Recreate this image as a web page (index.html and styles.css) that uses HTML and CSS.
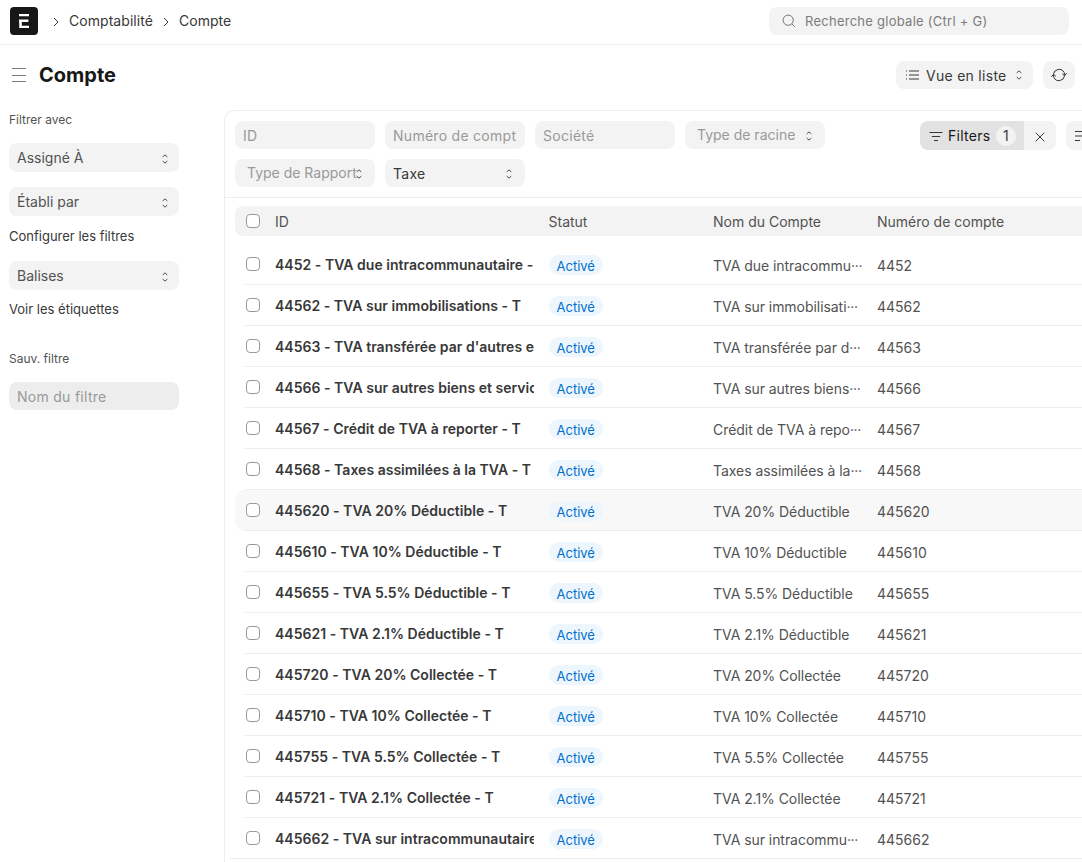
FILE: index.html
```html
<!DOCTYPE html>
<html lang="fr">
<head>
<meta charset="utf-8">
<title>Compte</title>
<link rel="stylesheet" href="styles.css">
</head>
<body>
<svg class="sprite" aria-hidden="true">
  <symbol id="updown" viewBox="0 0 8 10"><path d="M1.7 2.9 4 .9l2.3 2M1.7 7.1 4 9.1l2.3-2"/></symbol>
  <symbol id="chev" viewBox="0 0 6 10"><path d="M1 1l4 4-4 4"/></symbol>
</svg>
<header class="navbar">
  <svg class="logo" viewBox="0 0 28 28"><rect width="28" height="28" rx="4" fill="#171717"/><path d="M9 7h10v2.3H9zM9 12.6h9.4v2.3h-6.6v3.9H19v2.3H9.2v-6.4H9z" fill="#fff"/></svg>
  <nav class="crumbs">
    <svg class="chev"><use href="#chev"/></svg><a>Comptabilité</a>
    <svg class="chev"><use href="#chev"/></svg><a>Compte</a>
  </nav>
  <div class="search"><svg viewBox="0 0 14 14"><circle cx="6.2" cy="6.2" r="5.1"/><path d="M9.9 9.9l3 3"/></svg><span>Recherche globale (Ctrl + G)</span></div>
</header>
<div class="page-head">
  <svg class="burger" viewBox="0 0 14 14"><path d="M0 .5h14M0 7.5h14M0 13.5h14"/></svg>
  <h1>Compte</h1>
  <button class="btn view"><svg class="list-icon" viewBox="0 0 13 11"><path d="M0 1h1M3 1h10M0 5h1M3 5h10M0 9h1M3 9h10"/></svg><span>Vue en liste</span><svg class="updown"><use href="#updown"/></svg></button>
  <button class="btn refresh"><svg viewBox="0 0 16 16"><path d="M2.4 7.4A5.7 5.7 0 0 1 13.2 5.6L13.6 8M13.6 8.6A5.7 5.7 0 0 1 2.8 10.4L2.4 8"/><path d="M11.2 6.8l2.4 1.8 2-2.4M.4 9.8l2-2.4 2.4 1.8"/></svg></button>
</div>
<div class="layout">
  <aside class="sidebar">
    <p class="label">Filtrer avec</p>
    <div class="select">Assigné À<svg class="updown"><use href="#updown"/></svg></div>
    <div class="select second">Établi par<svg class="updown"><use href="#updown"/></svg></div>
    <a class="link">Configurer les filtres</a>
    <div class="select third">Balises<svg class="updown"><use href="#updown"/></svg></div>
    <a class="link">Voir les étiquettes</a>
    <p class="label save">Sauv. filtre</p>
    <div class="name-input">Nom du filtre</div>
  </aside>
  <main class="panel">
    <div class="filters">
      <div class="fields">
        <div class="field">ID</div>
        <div class="field"><span class="cut">Numéro de compt</span></div>
        <div class="field">Société</div>
        <div class="field ph">Type de racine<svg class="updown"><use href="#updown"/></svg></div>
        <div class="field ph">Type de Rapport<svg class="updown"><use href="#updown"/></svg></div>
        <div class="field value">Taxe<svg class="updown"><use href="#updown"/></svg></div>
      </div>
      <div class="actions">
        <div class="group">
          <button class="filter-btn"><svg viewBox="0 0 14 10"><path d="M.5 1.5h13M2.8 5.5h8.4M5 9.5h4"/></svg>Filters<span class="count">1</span></button>
          <button class="clear"><svg viewBox="0 0 10 10"><path d="M.8.8l8.4 8.4M9.2.8L.8 9.2"/></svg></button>
        </div>
        <button class="sort"><svg viewBox="0 0 14 10"><path d="M0 .5h13M0 5h9M0 9.5h5"/></svg></button>
      </div>
    </div>
    <div class="table">
      <div class="thead"><i class="box"></i><span>ID</span><span>Statut</span><span>Nom du Compte</span><span>Numéro de compte</span></div>
      <div class="row"><i class="box"></i><b>4452 - TVA due intracommunautaire -</b><span class="pill">Activé</span><span class="name">TVA due intracommu<em>···</em></span><span>4452</span></div>
      <div class="row"><i class="box"></i><b>44562 - TVA sur immobilisations - T</b><span class="pill">Activé</span><span class="name">TVA sur immobilisati<em>···</em></span><span>44562</span></div>
      <div class="row"><i class="box"></i><b>44563 - TVA transférée par d'autres e</b><span class="pill">Activé</span><span class="name">TVA transférée par d<em>···</em></span><span>44563</span></div>
      <div class="row"><i class="box"></i><b>44566 - TVA sur autres biens et servic</b><span class="pill">Activé</span><span class="name">TVA sur autres biens<em>···</em></span><span>44566</span></div>
      <div class="row"><i class="box"></i><b>44567 - Crédit de TVA à reporter - T</b><span class="pill">Activé</span><span class="name">Crédit de TVA à repo<em>···</em></span><span>44567</span></div>
      <div class="row"><i class="box"></i><b>44568 - Taxes assimilées à la TVA - T</b><span class="pill">Activé</span><span class="name">Taxes assimilées à la<em>···</em></span><span>44568</span></div>
      <div class="row hover"><i class="box"></i><b>445620 - TVA 20% Déductible - T</b><span class="pill">Activé</span><span class="name">TVA 20% Déductible</span><span>445620</span></div>
      <div class="row"><i class="box"></i><b>445610 - TVA 10% Déductible - T</b><span class="pill">Activé</span><span class="name">TVA 10% Déductible</span><span>445610</span></div>
      <div class="row"><i class="box"></i><b>445655 - TVA 5.5% Déductible - T</b><span class="pill">Activé</span><span class="name">TVA 5.5% Déductible</span><span>445655</span></div>
      <div class="row"><i class="box"></i><b>445621 - TVA 2.1% Déductible - T</b><span class="pill">Activé</span><span class="name">TVA 2.1% Déductible</span><span>445621</span></div>
      <div class="row"><i class="box"></i><b>445720 - TVA 20% Collectée - T</b><span class="pill">Activé</span><span class="name">TVA 20% Collectée</span><span>445720</span></div>
      <div class="row"><i class="box"></i><b>445710 - TVA 10% Collectée - T</b><span class="pill">Activé</span><span class="name">TVA 10% Collectée</span><span>445710</span></div>
      <div class="row"><i class="box"></i><b>445755 - TVA 5.5% Collectée - T</b><span class="pill">Activé</span><span class="name">TVA 5.5% Collectée</span><span>445755</span></div>
      <div class="row"><i class="box"></i><b>445721 - TVA 2.1% Collectée - T</b><span class="pill">Activé</span><span class="name">TVA 2.1% Collectée</span><span>445721</span></div>
      <div class="row last"><i class="box"></i><b>445662 - TVA sur intracommunautaire</b><span class="pill">Activé</span><span class="name">TVA sur intracommu<em>···</em></span><span>445662</span></div>
    </div>
  </main>
</div>
</body>
</html>
```
FILE: styles.css
```css
* { box-sizing: border-box; }
html, body { height: 862px; overflow: hidden; }
body {
  margin: 0;
  background: #fff;
  color: #525252;
  font: 420 14px/20px Inter, sans-serif;
}
svg { fill: none; stroke: #383838; flex: none; }
button { border: 0; margin: 0; font: inherit; color: #383838; background: #f3f3f3; }
button, .search, .field, .name-input { letter-spacing: 0.02em; }
.sprite { display: none; }
.updown { width: 8px; height: 10px; stroke-width: 0.9; }

.navbar {
  display: flex;
  align-items: center;
  height: 45px;
  padding: 0 13px 2px 10px;
  border-bottom: 1px solid #ededed;
}
.logo { width: 28px; height: 28px; stroke: none; }
.crumbs { display: flex; align-items: center; margin-left: 15px; color: #383838; letter-spacing: 0.05px; }
.crumbs a { margin: 0 10px; }
.chev { width: 6px; height: 10px; margin-top: 2px; }
.search {
  display: flex;
  align-items: center;
  gap: 9px;
  width: 300px;
  height: 28px;
  margin-left: auto;
  padding-left: 13px;
  border-radius: 8px;
  background: #f3f3f3;
  color: #7c7c7c;
  font-size: 13px;
}
.search svg { width: 14px; height: 14px; stroke: #666; stroke-width: 0.9; }

.page-head { display: flex; align-items: center; height: 60px; padding: 0 7px 0 12px; }
.burger { width: 14px; height: 14px; stroke: #7c7c7c; }
h1 { margin: 0 auto 0 13px; color: #171717; font-size: 20px; line-height: 24px; font-weight: 700; }
.btn { display: flex; align-items: center; height: 28px; border-radius: 8px; }
.view { width: 137px; padding: 1px 10px 0; }
.view span { margin: 0 8px 0 7px; }
.view .updown { margin-top: -1px; }
.list-icon { width: 13px; height: 11px; }
.refresh { width: 32px; margin-left: 10px; padding: 0; justify-content: center; }
.refresh svg { width: 16px; height: 16px; }

.layout { display: flex; align-items: flex-start; }
.sidebar { width: 224px; flex: none; padding: 5px 45px 0 9px; }
.label { margin: 0 0 13px; font-size: 12px; line-height: 20px; }
.select {
  display: flex;
  align-items: center;
  justify-content: space-between;
  height: 29px;
  padding: 0 10px 0 8px;
  border-radius: 8px;
  background: #f3f3f3;
}
.select .updown { margin-top: 3px; }
.second { margin-top: 15px; }
.link { display: block; margin-top: 10px; color: #383838; font-size: 13px; line-height: 20px; }
.third { margin-top: 15px; }
.third + .link { margin-top: 9px; }
.save { margin: 30px 0 13px; }
.name-input { height: 28px; padding: 5px 8px; border-radius: 8px; background: #ededed; color: #999; }

.panel { flex: none; width: 900px; min-height: 760px; margin-top: 5px; border: 1px solid #ededed; border-radius: 10px 0 0 0; border-bottom: 0; }
.filters { display: flex; height: 87px; padding: 10px; border-bottom: 1px solid #ededed; }
.fields { display: flex; flex: none; flex-wrap: wrap; gap: 10px; width: 685px; align-content: flex-start; }
.field {
  display: flex;
  align-items: center;
  justify-content: space-between;
  width: 140px;
  height: 28px;
  padding: 2px 12px 0 8px;
  border-radius: 8px;
  background: #f3f3f3;
  color: #999;
  white-space: nowrap;
}
.ph { padding: 0 12px; letter-spacing: 0; }
.ph .updown { margin: 2px 0 0 -4px; }
.value { color: #383838; }
.cut { width: 125px; flex: none; overflow: hidden; }
.actions { display: flex; flex: none; align-items: flex-start; gap: 10px; }
.group { display: flex; height: 29px; border-radius: 8px; overflow: hidden; }
.filter-btn { display: flex; align-items: center; width: 104px; padding: 0 8px 0 9px; background: #e2e2e2; color: #171717; }
.filter-btn svg { width: 14px; height: 10px; margin: 1px 5px 0 0; }
.count { width: 20px; height: 20px; margin-left: auto; border-radius: 50%; background: #f3f3f3; color: #383838; text-align: center; }
.clear { width: 32px; padding: 3px 0 0; }
.clear svg { width: 10px; height: 10px; }
.sort { width: 60px; height: 29px; padding: 0 0 0 9px; border-radius: 8px; text-align: left; }
.sort svg { width: 14px; height: 10px; }

.table { padding: 8px 0 0 10px; }
.thead, .row {
  display: grid;
  grid-template-columns: 29px 273.5px 164.5px 164px 200px;
  align-items: center;
  padding-left: 11px;
}
.thead { height: 30px; margin-bottom: 8px; padding-top: 1px; border-radius: 8px; background: #f3f3f3; }
.row { position: relative; height: 41px; padding-top: 2px; border-radius: 10px; white-space: nowrap; }
.row::after { content: ""; position: absolute; left: 10px; right: 0; bottom: 0; height: 1px; background: #ededed; }
.row.last::after { left: -5px; }
.hover { background: #f8f8f8; }
.box { width: 14px; height: 14px; margin-bottom: 2px; border: 1px solid #999; border-radius: 4px; background: #fff; }
.row .box { margin-bottom: 4px; }
.row b { width: 259px; overflow: hidden; margin-bottom: 2px; color: #383838; font-weight: 600; letter-spacing: 0.02px; }
.name { letter-spacing: -0.05px; }
.row em { font-style: normal; letter-spacing: -0.3px; }
.pill { justify-self: start; height: 20px; margin-bottom: 2px; padding: 1px 8px 0; border-radius: 10px; background: #edf6fd; color: #0070cc; font-size: 13px; line-height: 20px; }
```
